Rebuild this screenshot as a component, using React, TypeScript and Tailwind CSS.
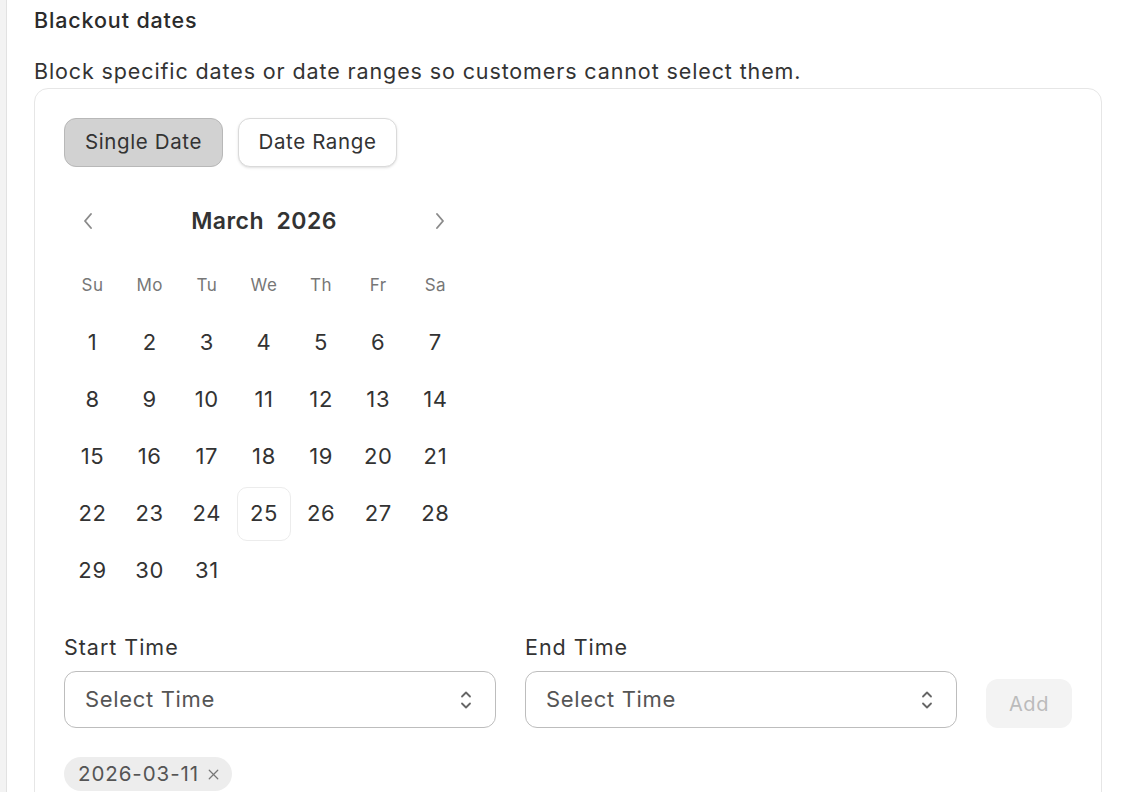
import { X } from "lucide-react";

const weekdays = ["Su", "Mo", "Tu", "We", "Th", "Fr", "Sa"];
const days = Array.from({ length: 31 }, (_, i) => i + 1);
const today = 25;

function UpDownIcon() {
  return (
    <svg width="12" height="20" viewBox="0 0 12 20" fill="none" stroke="#666" strokeWidth="1.8" strokeLinecap="round" strokeLinejoin="round">
      <path d="M2 6.5 6 2.5l4 4" />
      <path d="M2 13.5l4 4 4-4" />
    </svg>
  );
}

function NavChevron({ dir }: { dir: "left" | "right" }) {
  return (
    <svg width="12" height="18" viewBox="0 0 12 18" fill="none" stroke="#8a8a8a" strokeWidth="1.9" strokeLinecap="round" strokeLinejoin="round">
      {dir === "left" ? <path d="M9 2 3 9l6 7" /> : <path d="M3 2l6 7-6 7" />}
    </svg>
  );
}

function TimeSelect() {
  return (
    <button
      type="button"
      className="flex h-[57px] flex-1 items-center justify-between rounded-[12px] border border-[#bdbdbd] bg-white pl-[20px] pr-[23px] text-[22px] tracking-[0.03em] text-[#555]"
    >
      <span>Select Time</span>
      <UpDownIcon />
    </button>
  );
}

export default function App() {
  return (
    <div className="flex h-[792px] overflow-hidden bg-white font-['Inter',sans-serif] text-[#2b2b2b]">
      <div className="w-[7px] shrink-0 border-r border-[#e2e2e2] bg-[#f3f3f3]" />
      <div className="flex-1 pl-[27px] pr-[24px] pt-[6px]">
        <h2 className="text-[21.5px] font-medium leading-[28px] tracking-[0.04em] text-[#2b2b2b]">Blackout dates</h2>
        <p className="mt-[23px] text-[21.5px] leading-[28px] tracking-[0.041em] text-[#333]">
          Block specific dates or date ranges so customers cannot select them.
        </p>

        <div className="mt-[3px] rounded-[14px] border border-[#e6e6e6] px-[29px] pb-[40px] pt-[29px]">
          <div className="flex gap-[15px]">
            <button
              type="button"
              className="h-[49px] w-[159px] rounded-[12px] border border-[#b8b8b8] bg-[#d2d2d2] text-[20.5px] tracking-[0.03em] text-[#333]"
            >
              Single Date
            </button>
            <button
              type="button"
              className="h-[49px] w-[159px] rounded-[12px] border border-[#dadada] bg-white text-[20.5px] tracking-[0.03em] text-[#333] shadow-sm"
            >
              Date Range
            </button>
          </div>

          <div className="mt-[34px] w-[400px]">
            <div className="flex h-[40px] items-center justify-between">
              <span className="flex w-[48px] justify-center">
                <NavChevron dir="left" />
              </span>
              <span className="text-[23px] font-semibold tracking-[0.02em] text-[#333]">
                March&nbsp;&nbsp;2026
              </span>
              <span className="flex w-[48px] justify-center">
                <NavChevron dir="right" />
              </span>
            </div>

            <div className="mt-[16px] grid grid-cols-7">
              {weekdays.map((d) => (
                <div key={d} className="flex h-[57px] items-center justify-center text-[17px] tracking-[0.03em] text-[#777]">
                  {d}
                </div>
              ))}
              {days.map((d) => (
                <div key={d} className="flex h-[57px] items-center justify-center">
                  <span
                    className={
                      d === today
                        ? "flex h-[54px] w-[54px] items-center justify-center rounded-[10px] border border-[#ececec] text-[22px] tracking-[0.03em] text-[#333]"
                        : "flex h-[54px] w-[54px] items-center justify-center text-[22px] tracking-[0.03em] text-[#333]"
                    }
                  >
                    {d}
                  </span>
                </div>
              ))}
            </div>
          </div>

          <div className="mt-[34px] flex items-end gap-[29px]">
            <div className="flex flex-1 flex-col gap-[10px]">
              <label className="text-[21.5px] leading-[28px] tracking-[0.045em] text-[#333]">Start Time</label>
              <div className="flex">
                <TimeSelect />
              </div>
            </div>
            <div className="flex flex-1 flex-col gap-[10px]">
              <label className="text-[21.5px] leading-[28px] tracking-[0.045em] text-[#333]">End Time</label>
              <div className="flex">
                <TimeSelect />
              </div>
            </div>
            <button
              type="button"
              disabled
              className="h-[49px] w-[86px] rounded-[12px] bg-[#f3f3f3] text-[20px] tracking-[0.03em] text-[#bbb]"
            >
              Add
            </button>
          </div>

          <div className="mt-[29px] flex">
            <span className="flex h-[34px] items-center gap-[6px] rounded-full bg-[#ededed] pl-[14px] pr-[10px] text-[20.5px] tracking-[0.045em] text-[#555]">
              2026-03-11
              <X className="h-[17px] w-[17px] text-[#777]" strokeWidth={1.75} />
            </span>
          </div>
        </div>
      </div>
    </div>
  );
}
